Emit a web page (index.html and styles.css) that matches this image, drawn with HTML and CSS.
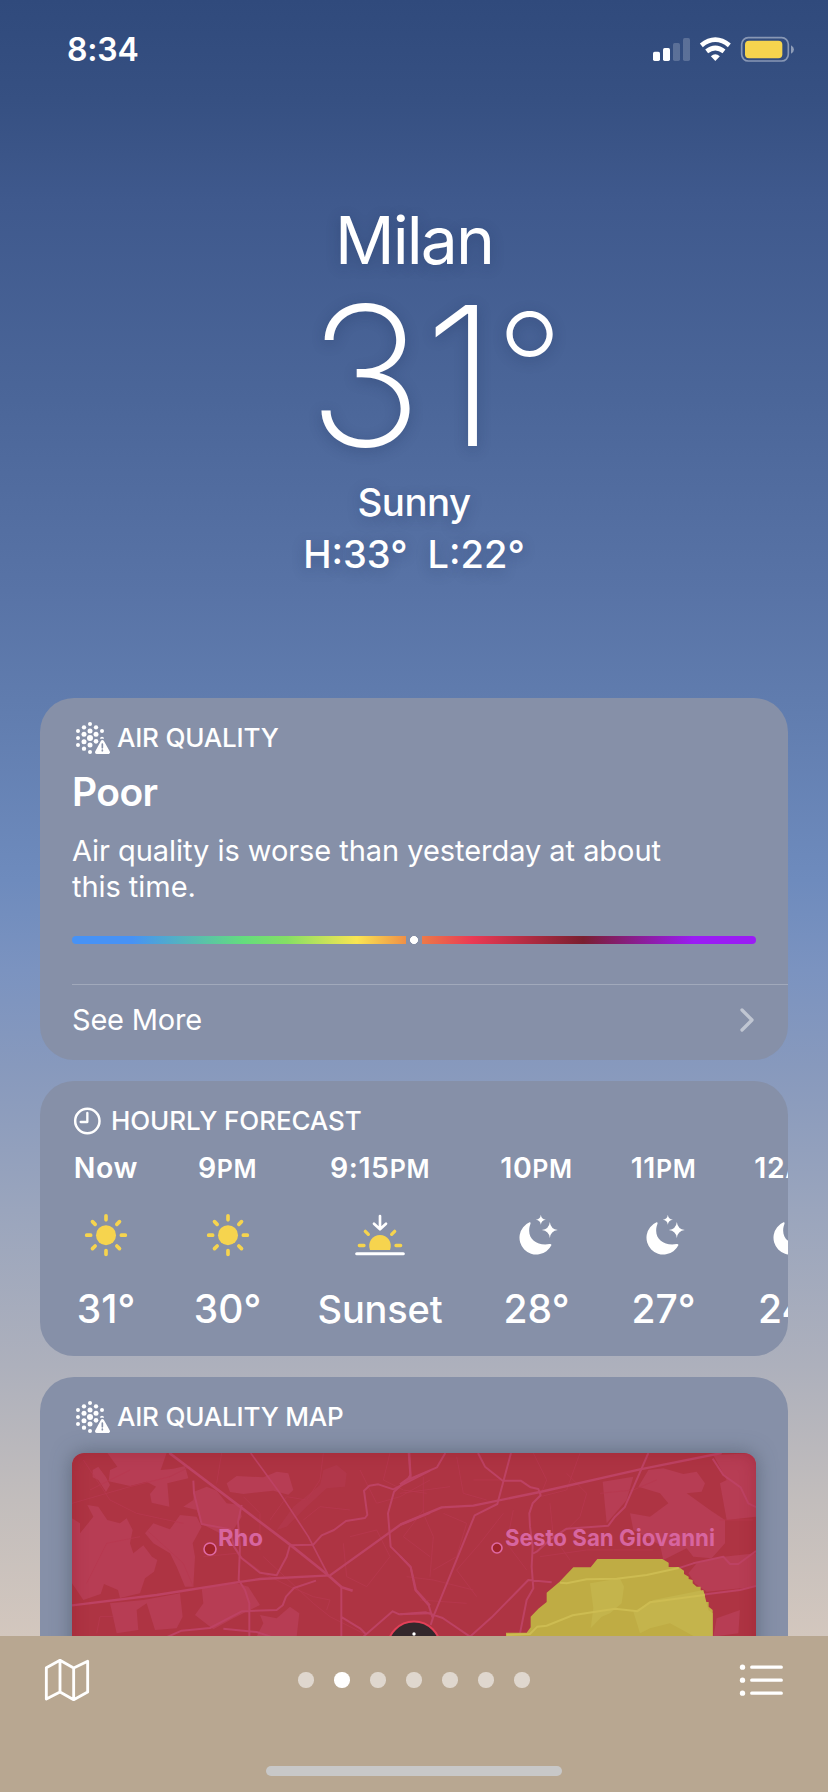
FILE: index.html
```
<!DOCTYPE html>
<html lang="en">
<head>
<meta charset="utf-8">
<title>Weather</title>
<link rel="stylesheet" href="styles.css">
</head>
<body>
<svg class="defs" width="0" height="0" aria-hidden="true">
  <symbol id="aqi" viewBox="126 90 120 108">
    <g fill="#fff">
      <circle cx="144" cy="123" r="6"/><circle cx="144" cy="144" r="6"/><circle cx="144" cy="165" r="6"/>
      <circle cx="162" cy="112" r="6.5"/><circle cx="162" cy="133" r="7.5"/><circle cx="162" cy="155" r="7.5"/><circle cx="162" cy="176" r="6.5"/>
      <circle cx="180" cy="102" r="6"/><circle cx="180" cy="123" r="7.5"/><circle cx="180" cy="144" r="9"/><circle cx="180" cy="165" r="7.5"/><circle cx="180" cy="186" r="6"/>
      <circle cx="198" cy="112" r="6.5"/><circle cx="198" cy="133" r="7.5"/><circle cx="198" cy="154" r="7"/>
      <circle cx="216" cy="123" r="6"/><path d="M210 146a6 6 0 0 1 12 0z"/>
    </g>
    <path d="M217 155L235 188H199Z" fill="#8690a8" stroke="#8690a8" stroke-width="16" stroke-linejoin="round"/>
    <path d="M217 155L235 187H200Z" fill="#fff" stroke="#fff" stroke-width="10" stroke-linejoin="round"/>
    <path d="M217 162v11M217 180v2" stroke="#8690a8" stroke-width="5" stroke-linecap="round"/>
  </symbol>
  <symbol id="sun" viewBox="138 413 180 168">
    <circle cx="228" cy="497.500" r="30" fill="#f6d44e"/>
    <path d="M228 451.500v-12M228 543.500v12M182 497.500h-12M274 497.500h12M195.500 465l-8-8M260.500 465l8-8M195.500 530l-8 8M260.500 530l8 8" stroke="#f6d44e" stroke-width="11" stroke-linecap="round"/>
  </symbol>
  <symbol id="sunset" viewBox="960 413 180 168">
    <path d="M1020 542A32.500 32.500 0 1 1 1080 542Z" fill="#f6d44e"/>
    <path d="M988 528.500h14M1098 528.500h14M1006 486l9 9M1085 495l9-9" stroke="#f6d44e" stroke-width="10" stroke-linecap="round"/>
    <path d="M1050 440v38M1032 463l18 17 18-17" fill="none" stroke="#fff" stroke-width="8" stroke-linecap="round" stroke-linejoin="round"/>
    <path d="M980 553.500h140" stroke="#fff" stroke-width="9" stroke-linecap="round"/>
  </symbol>
  <symbol id="moon" viewBox="319.500 413 180 168">
    <path fill="#fff" d="M387 459A50.500 50.500 0 1 0 453 527Q452 523 447 524C414 530 386 513 386 484C386 474 388 469 390 463Q391 458 387 459Z"/>
    <path fill="#fff" d="M421 436Q422.500 449.500 436 451Q422.500 452.500 421 466Q419.500 452.500 406 451Q419.500 449.500 421 436ZM448 458Q450.500 479.500 472 482Q450.500 484.500 448 506Q445.500 484.500 424 482Q445.500 479.500 448 458Z"/>
  </symbol>
</svg>
<div class="screen">
  <header class="status">
    <span class="time">8:34</span>
    <svg class="indicators" viewBox="0 0 510 150">
      <g fill="#fff">
        <rect x="39" y="80" width="21" height="28" rx="5"/><rect x="69" y="69" width="21" height="39" rx="5"/>
        <rect x="99" y="54" width="21" height="54" rx="5" opacity=".2"/><rect x="129" y="39" width="21" height="69" rx="5" opacity=".2"/>
        <path d="M226 108L212.500 94Q226 82 239.500 94Z"/>
      </g>
      <path d="M184 61Q226 27 268 61M200 79Q226 59 252 79" fill="none" stroke="#fff" stroke-width="14"/>
      <rect x="305" y="38" width="140" height="70" rx="20" fill="none" stroke="#fff" stroke-opacity=".42" stroke-width="5"/>
      <rect x="315" y="47.500" width="112" height="52" rx="12" fill="#f6d44e"/>
      <path d="M453 61Q462 66 462 73.500T453 86Z" fill="#fff" opacity=".45"/>
    </svg>
  </header>

  <section class="current">
    <h1 class="city">Milan</h1>
    <div class="temp">31<span class="degree">°</span></div>
    <div class="condition">Sunny</div>
    <div class="range"><span>H:33°</span><span>L:22°</span></div>
  </section>

  <main class="cards">
    <section class="card air">
      <h2 class="card-title"><svg class="aqi-icon"><use href="#aqi"/></svg>AIR QUALITY</h2>
      <div class="level">Poor</div>
      <p class="summary">Air quality is worse than yesterday at about<br>this time.</p>
      <div class="scale"><span class="marker"></span></div>
      <div class="more"><span>See More</span>
        <svg class="chevron" viewBox="0 0 14 24"><path d="M2 2l10 10L2 22" fill="none" stroke="#c0c6d2" stroke-width="3.300" stroke-linecap="round" stroke-linejoin="round"/></svg>
      </div>
    </section>

    <section class="card hourly">
      <h2 class="card-title clock-title"><svg class="clock-icon" viewBox="126 110 90 90"><circle cx="172" cy="155" r="36.500" fill="none" stroke="#fff" stroke-width="7.500"/><path d="M152 158h20v-27" fill="none" stroke="#fff" stroke-width="7" stroke-linecap="round" stroke-linejoin="round"/></svg>HOURLY FORECAST</h2>
      <div class="hours">
        <div class="hour"><span class="when">Now</span><svg><use href="#sun"/></svg><span class="deg">31°</span></div>
        <div class="hour"><span class="when">9<small>PM</small></span><svg><use href="#sun"/></svg><span class="deg">30°</span></div>
        <div class="hour"><span class="when">9:15<small>PM</small></span><svg><use href="#sunset"/></svg><span class="deg event">Sunset</span></div>
        <div class="hour"><span class="when">10<small>PM</small></span><svg><use href="#moon"/></svg><span class="deg">28°</span></div>
        <div class="hour"><span class="when">11<small>PM</small></span><svg><use href="#moon"/></svg><span class="deg">27°</span></div>
        <div class="hour"><span class="when">12<small>AM</small></span><svg><use href="#moon"/></svg><span class="deg">24°</span></div>
      </div>
    </section>

    <section class="card map-card">
      <h2 class="card-title"><svg class="aqi-icon"><use href="#aqi"/></svg>AIR QUALITY MAP</h2>
      <div class="map">
        <svg viewBox="0 0 684 260">
          <rect width="684" height="260" fill="#ae3443"/>
          <g transform="translate(-42 -83) scale(.33333)">
            <g fill="#b73d54">
              <path d="M232 249H410L392 300 430 296 465 288 475 325 412 340 418 410 365 398 360 372 378 350 350 335 300 348 236 334 240 300 262 290Z"/>
              <path d="M188 300L205 290 228 322 240 345 228 366 205 330 188 322Z"/>
              <path d="M126 445L150 460 150 490 190 440 172 405 205 410 232 450 270 460 290 445 308 480 300 520 310 550 340 526 366 560 382 570 372 605 345 625 330 670 270 684 264 660 222 642 212 672 160 690 126 640Z"/>
              <path d="M590 340L620 318 700 322 740 305 775 310 790 360 775 374 730 362 640 372 600 366Z"/>
              <path d="M460 410L490 390 492 365 530 350 560 362 590 400 630 405 635 440 610 480 570 490 515 462 500 420Z"/>
              <path d="M345 490L370 460 420 478 450 435 500 440 515 470 488 520 495 560 490 650 465 650 440 590 420 550 370 520Z"/>
              <path d="M515 655L620 640 655 650 690 705 610 745 550 778 495 735 520 700Z"/>
              <path d="M240 700L340 690 450 670 458 740 440 775 375 780 350 700 320 720 325 780 260 790Z"/>
              <path d="M690 735L740 745 780 710 808 730 800 800H680L700 760Z"/>
              <path d="M870 345L880 300 920 285 950 310 945 350 890 355 830 410 770 470 740 480 790 410Z" opacity=".4"/>
            </g>
            <g fill="none" stroke="#b7394f" stroke-width="3" opacity=".75">
              <path d="M160 270L240 390 320 430 390 445 460 460M126 400L300 350 420 320 480 290M180 360L300 300M170 640L230 520 330 500M350 480L460 580 490 650M575 249L560 340M880 250L870 330 830 390 770 380 720 450M700 560L850 700 900 740 1000 790M960 500L1040 480 1080 560 1010 650 950 620 940 520M990 300L1040 400 1110 380 1200 330M820 450L870 410 960 420M640 380L690 430 690 540M1180 420L1120 500 1200 560M200 790L210 740 250 740M520 560L620 550 700 610 780 650 850 680 900 690 890 720M1080 249L1060 330 1120 360 1190 370"/>
            </g>
            <g fill="none" stroke="#bd4263" stroke-width="6" stroke-linejoin="round">
              <path stroke-width="8" d="M418 249L630 410 780 524 890 612 935 652 968 662"/>
              <path stroke-width="5" d="M662 249L750 370 835 500 893 612"/>
              <path stroke-width="7" d="M126 706L380 675 620 637 690 627 900 616 1110 465 1200 428"/>
              <path d="M490 332L492 370 515 462 600 478 612 530 635 565 690 608 740 616 770 560 780 526 850 524 875 496 912 480 948 453 1005 444 1012 435 1002 362 1018 347 1045 343 1090 358 1200 302"/>
              <path d="M635 405L624 455 630 530 626 630 645 660 658 700V800M400 806L455 782 540 774 635 724 740 720 758 706 768 680 792 654 858 632M580 776L680 786 740 806M1138 249L1142 320 1092 365 1074 430 1082 530 1142 590 1158 660 1200 706M934 652V800M936 742L990 775 1010 795M1000 800L1088 724 1108 733 1200 730"/>
            </g>
          </g>
          <g transform="translate(328 -83) scale(.33333)">
            <g fill="#b73d54">
              <path d="M608 335L700 320 680 390 620 460Z"/>
              <path d="M715 350L745 300 790 295 850 312 890 305 915 340 905 365 860 370 930 420 975 450 975 520 935 565 880 560 860 535 790 570 780 525 700 480 690 430 750 440 805 400 780 370Z"/>
              <path d="M940 255L1068 249V440L980 450 960 340 980 330Z"/>
              <path d="M865 610L890 580 970 560 1068 550V650L920 665 885 640Z"/>
              <path d="M950 745L1020 720 1015 790 940 800Z"/>
            </g>
            <g fill="none" stroke="#b7394f" stroke-width="3" opacity=".75">
              <path d="M70 320V430L100 500 90 620M170 260L190 370 260 390M400 249L440 330 420 380 500 360 540 249M130 430L200 460 170 560 100 600M310 430L240 520 170 600 230 680M20 620L100 630 220 660M420 560L560 540 640 540 760 540M450 400L460 500 510 570M500 310L560 370 540 440 500 480M220 330L300 330M340 420L320 520 380 600M600 370L700 360 770 330M960 450L1060 450M60 690L200 700M0 370L150 350"/>
            </g>
            <g fill="none" stroke="#bd4263" stroke-width="6" stroke-linejoin="round">
              <path stroke-width="7" d="M0 464L125 412 220 407 420 366 720 298 965 249"/>
              <path d="M26 249L31 315 25 325 0 343M136 249L111 292 22 330M234 249L255 290 308 332H362L392 352 415 357 422 376 398 400 388 430 390 470 398 530 395 590 400 655 380 690 360 790M333 249L292 402 224 436 100 740 92 765M745 249L674 412 645 440 625 467 500 476 455 505 410 545 400 550M0 558L32 592 46 660 86 706 97 742M0 733L78 727 128 744 210 800 275 742 385 630 455 637M938 266L970 315 1022 352 1045 400 1068 411M795 608L880 580 970 560 990 582H1015L1068 543M900 675L1020 660 1068 648"/>
            </g>
            <path fill="#bfac44" d="M318 798V788H380L392 772V740L415 716 440 696V668L478 636 520 592H572L592 567H787L806 578V591H836L852 602V612L866 620V627L878 630V640L890 650H902V660L914 672V696H926V710L938 720V798Z"/>
            <g fill="#c4b44c"><path d="M570 640L660 625 672 650 665 700 630 730 605 740 572 775 580 715Z"/><path d="M700 725L760 690 910 660 925 720 938 730V798H880L810 760 750 775 720 790Z"/></g>
            <g fill="none" stroke="#cdbc52" stroke-width="6"><path d="M480 638L500 640 560 628 650 626 740 615 836 594M320 795L390 792 412 770 440 767 518 736 645 716 712 724 750 697 914 675"/></g>
          </g>
          <circle cx="342" cy="195" r="26.500" fill="#33282c" stroke="#e24058" stroke-width="2"/>
          <circle cx="342" cy="181" r="1.700" fill="#fff"/>
          <circle cx="138" cy="96" r="6" fill="#a1232c" stroke="#df69a4" stroke-width="1.600"/>
          <circle cx="425" cy="95" r="5" fill="#a1232c" stroke="#df69a4" stroke-width="1.600"/>
          <text class="place" x="146" y="92.700" textLength="45" lengthAdjust="spacingAndGlyphs">Rho</text>
          <text class="place" x="433" y="92.700" textLength="210" lengthAdjust="spacingAndGlyphs">Sesto San Giovanni</text>
        </svg>
      </div>
    </section>
  </main>

  <footer class="toolbar">
    <div class="tools">
      <svg class="map-icon" viewBox="42 864 138 132"><path d="M49 893L90 871 131 894 173 874V966L131 989 90 966 49 987ZM90 871V966M131 894V989" fill="none" stroke="#fff" stroke-width="8.500" stroke-linejoin="round"/></svg>
      <div class="dots"><i></i><i class="on"></i><i></i><i></i><i></i><i></i><i></i></div>
      <svg class="list-icon" viewBox="1014 880 138 102"><g fill="#fff"><circle cx="1027.500" cy="892.500" r="8"/><circle cx="1027.500" cy="931.500" r="8"/><circle cx="1027.500" cy="970.500" r="8"/></g><path d="M1055 892.500h89M1055 931.500h89M1055 970.500h89" stroke="#fff" stroke-width="9.500" stroke-linecap="round"/></svg>
    </div>
    <div class="home"></div>
  </footer>
</div>
</body>
</html>
```
FILE: styles.css
```
* { box-sizing: border-box; }
body { margin: 0; font-family: Inter, "Liberation Sans", sans-serif; color: #fff; }
.defs { position: absolute; }
h1, h2, p { margin: 0; font-weight: inherit; }
svg { display: block; flex: none; }
.screen {
  width: 828px; height: 1792px; overflow: hidden;
  display: flex; flex-direction: column;
  background: linear-gradient(#304a7c 0, #365082 100px, #3f598d 200px, #4b6699 400px, #5873a6 590px, #607cae 700px, #6e8bbd 880px, #7b93c0 970px, #8799bd 1065px, #9aa5bd 1210px, #adb0bc 1365px, #c2bdbc 1500px, #d3c7be 1636px);
}

.status { height: 100px; flex: none; display: flex; justify-content: space-between; align-items: flex-start; padding: 25px 18px 0 67px; }
.time { font-size: 32px; line-height: 50px; font-weight: 600; letter-spacing: -.2px; }
.indicators { width: 170px; height: 50px; }

.current { height: 598px; flex: none; padding-top: 100px; display: flex; flex-direction: column; align-items: center; white-space: nowrap; text-shadow: 0 3px 14px rgba(20, 40, 80, .28); }
.city { font-size: 66px; line-height: 80px; letter-spacing: -1.900px; }
.temp { margin-top: 16px; padding-left: 44px; font-size: 194px; line-height: 160px; font-weight: 200; letter-spacing: 1px; }
.degree { margin-left: -3px; font-size: 150px; font-weight: 250; line-height: 0; vertical-align: 25px; }
.condition { margin-top: 20px; font-size: 38.500px; line-height: 52px; font-weight: 500; letter-spacing: -.6px; }
.range { font-size: 38px; line-height: 52px; font-weight: 500; display: flex; gap: 20px; }

.cards { flex: 1; min-height: 0; overflow: hidden; display: flex; flex-direction: column; padding: 0 40px; }
.card { flex: none; border-radius: 34px; background: #8690a8; overflow: hidden; }
.card-title { display: flex; align-items: center; gap: 5px; margin-left: 32px; height: 40px; font-size: 26px; line-height: 40px; font-weight: 550; letter-spacing: -.2px; white-space: nowrap; }
.aqi-icon { width: 40px; height: 36px; }

.air { height: 362px; padding-top: 20px; }
.level { margin: 10px 0 0 32px; font-size: 39px; line-height: 48px; font-weight: 600; letter-spacing: -.6px; }
.summary { margin: 17px 0 0 32px; font-size: 29px; line-height: 36px; letter-spacing: -.05px; white-space: nowrap; }
.scale { margin: 31px 32px 0; height: 8px; border-radius: 4px; display: flex; justify-content: center; background: linear-gradient(90deg, #4792f5 0, #4792f5 60px, #64dd7d 172px, #85df64 215px, #fae552 285px, #ee8a45 337px, #ea3a54 400px, #7a1f30 511px, #9a1cf4 622px, #9a1cf4 100%); }
.marker { width: 16px; height: 8px; background: radial-gradient(circle, #fff 3.700px, #8690a8 4.300px); }
.more { margin: 40px 0 0 32px; padding: 0 34px 6px 0; height: 76px; border-top: 1px solid #a1a9bb; display: flex; align-items: center; justify-content: space-between; font-size: 29px; letter-spacing: -.2px; }
.chevron { width: 14px; height: 24px; }

.hourly { margin-top: 21px; height: 275px; padding-top: 20px; }
.clock-title { gap: 9px; letter-spacing: -.1px; }
.clock-icon { width: 30px; height: 30px; }
.hours { margin: 7px 0 0 20px; display: grid; grid-template-columns: 92px 151px 154px 159px 95px 160px; width: 811px; }
.hour { display: flex; flex-direction: column; align-items: center; white-space: nowrap; }
.hour svg { width: 60px; height: 56px; margin: 19px 0 22px; }
.when { height: 40px; font-size: 28.500px; line-height: 40px; font-weight: 600; letter-spacing: .6px; }
.when small { font-size: 25px; }
.deg { font-size: 39px; line-height: 48px; font-weight: 500; }
.event { font-size: 38px; letter-spacing: -.2px; }

.map-card { margin-top: 21px; height: 340px; padding-top: 20px; }
.map { margin: 16px 32px 0; height: 260px; border-radius: 12px; overflow: hidden; box-shadow: 0 0 20px rgba(70, 80, 95, .6); position: relative; }
.map::after { content: ""; position: absolute; inset: 0; border-radius: 12px; box-shadow: inset 0 0 16px rgba(130, 20, 30, .3); }
.map svg { width: 684px; height: 260px; }
.place { font-size: 23.500px; font-weight: 650; fill: #d765a0; }

.toolbar { flex: none; height: 156px; background: #b8a791; padding: 22px 44px 0; }
.tools { height: 44px; display: flex; align-items: center; justify-content: space-between; }
.map-icon { width: 46px; height: 44px; }
.list-icon { width: 46px; height: 34px; }
.dots { display: flex; gap: 20.600px; }
.dots i { width: 15.400px; height: 15.400px; border-radius: 50%; background: #dfd7ce; }
.dots .on { background: #fff; }
.home { margin: 64px auto 0; width: 296px; height: 10px; border-radius: 5px; background: #c8c8c8; }
```
